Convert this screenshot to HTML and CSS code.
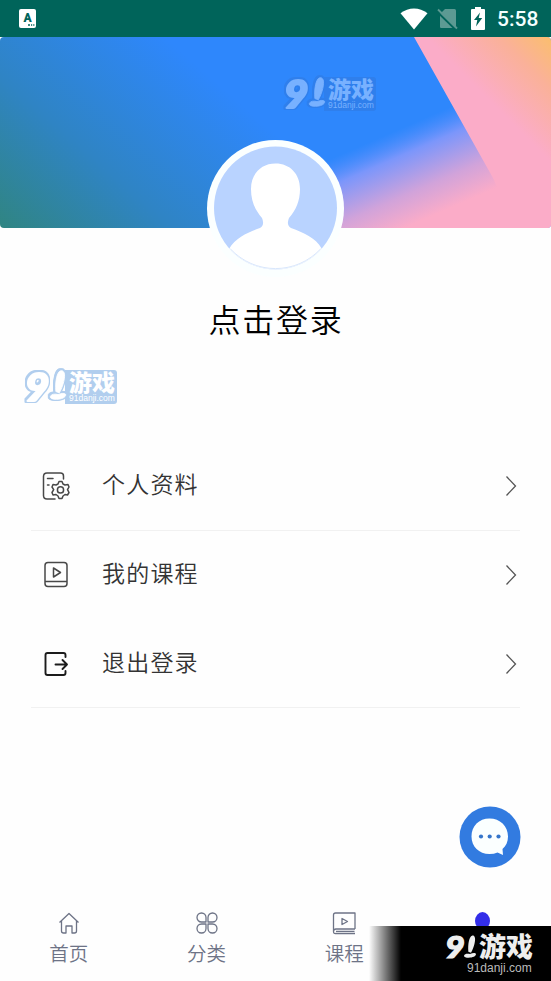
FILE: index.html
```html
<!DOCTYPE html>
<html lang="zh-CN">
<head>
<meta charset="utf-8">
<title>我的</title>
<link rel="stylesheet" href="styles.css">
</head>
<body>
<svg width="0" height="0" class="defs" aria-hidden="true">
  <defs>
    <symbol id="chevron" viewBox="0 0 12 22"><path d="M1.500 1.500L10.500 11L1.500 20.500" fill="none" stroke="#555" stroke-width="1.300"/></symbol>
    <symbol id="one" viewBox="0 0 20 36" overflow="visible"><path d="M13 1C9 2 6.500 13 7.500 25L11.500 26.500C16 19 19 7 17 3C16 1 14.500 .5 13 1Z"/><path d="M1 31C2 28 6 27.500 10 28.500C14 27 18 26.500 19 28.500C19 32 14 34 8 34C4 34 1 33 1 31Z"/></symbol>
  </defs>
</svg>
<div class="screen">
  <header class="status">
    <svg class="ime" width="17" height="19" viewBox="0 0 17 19"><rect width="17" height="19" rx="2" fill="#fff"/><text x="8.500" y="13" text-anchor="middle" class="ime-letter">A</text><path d="M9 16h2M12 16h1.200M14.200 16h1.200" stroke="#00645a" stroke-width="1.300"/></svg>
    <div class="status-right">
      <svg width="28" height="22" viewBox="0 0 28 22"><path d="M.5 5.200C8.500-1.200 19.500-1.200 27.500 5.200L14 21.500Z" fill="#fff"/></svg>
      <svg class="sim" width="21" height="22" viewBox="0 0 21 22"><path d="M8 1H17.500Q19 1 19 2.500V20H4Q3 20 3 18.500V6Z" fill="#5c9a93"/><path d="M0 3.500L19 22" stroke="#00645a" stroke-width="2"/><path d="M1 1.500L20 20.500" stroke="#5c9a93" stroke-width="1.800"/></svg>
      <svg class="battery" width="14" height="23" viewBox="0 0 14 23"><path d="M4 0H10V2H13Q14 2 14 3V22Q14 23 13 23H1Q0 23 0 22V3Q0 2 1 2H4Z" fill="#fff"/><path d="M9 5.500L3 13H6.300L5 19.500L11.200 11H7.700Z" fill="#00645a"/></svg>
      <span class="clock">5:58</span>
    </div>
  </header>

  <section class="hero">
    <svg class="hero-bg" width="551" height="191" viewBox="0 0 551 191">
      <defs>
        <linearGradient id="blue" gradientUnits="userSpaceOnUse" x1="-10" y1="200" x2="165" y2="0">
          <stop offset="0" stop-color="#30857a"/><stop offset=".48" stop-color="#2f84c4"/><stop offset="1" stop-color="#2e87fc"/>
        </linearGradient>
        <linearGradient id="mix" gradientUnits="userSpaceOnUse" x1="388" y1="97" x2="425" y2="182">
          <stop offset="0" stop-color="#5a8ffc" stop-opacity="0"/><stop offset=".27" stop-color="#7b96fb"/><stop offset=".68" stop-color="#d1a3da"/><stop offset="1" stop-color="#fbacc8"/>
        </linearGradient>
        <linearGradient id="pink" gradientUnits="userSpaceOnUse" x1="558" y1="0" x2="492" y2="66">
          <stop offset="0" stop-color="#fac068"/><stop offset=".45" stop-color="#fab199"/><stop offset="1" stop-color="#fbacc8"/>
        </linearGradient>
      </defs>
      <rect width="551" height="191" fill="url(#blue)"/>
      <path d="M270 0H551V191H270Z" fill="url(#mix)"/>
      <path d="M414 0H551V191H515L493 141Z" fill="url(#pink)"/>
    </svg>
    <svg class="mark mark-hero" width="106" height="50" viewBox="0 -6 106 50">
      <path class="plate" d="M43 3H92Q95 3 95 6V34Q95 37 92 37H43Z"/>
      <g class="logo"><text transform="translate(3 34) scale(1.100 1)" class="nine">9</text><use class="one" href="#one" x="26" y="3" width="20" height="31"/></g><text x="47" y="24" class="game">游戏</text><text x="47" y="34" class="site">91danji.com</text>
    </svg>
    <svg class="avatar" width="137" height="137" viewBox="0 0 137 137">
      <defs><clipPath id="face"><circle cx="68.500" cy="68" r="61.500"/></clipPath></defs>
      <circle cx="68.500" cy="68.500" r="68.500" fill="#fbffff"/>
      <circle cx="68.500" cy="68" r="61.500" fill="#b9d3ff"/>
      <path clip-path="url(#face)" d="M68.500 23.500C83 23.500 93 34 93 49C93 61 89 70 82 78Q79 85 84 88C97 93 108 97 115 109V131H22V109C29 97 42 92 53 88Q58 85 55 78C48 70 44 61 44 49C44 34 54 23.500 68.500 23.500Z" fill="#fff"/>
      <path d="M23.500 109A61.500 61.500 0 0 0 113.500 109" fill="none" stroke="#d9e7fc" stroke-width="1"/>
    </svg>
  </section>

  <h1 class="login">点击登录</h1>
  <svg class="mark mark-body" width="106" height="50" viewBox="0 -6 106 50">
    <path class="plate" d="M43 3H92Q95 3 95 6V34Q95 37 92 37H43Z"/>
    <g class="logo"><text transform="translate(3 34) scale(1.100 1)" class="nine">9</text><use class="one" href="#one" x="26" y="3" width="20" height="31"/></g><text x="47" y="24" class="game">游戏</text><text x="47" y="34" class="site">91danji.com</text>
  </svg>

  <nav class="menu">
    <a class="row lined">
      <svg class="row-icon" width="30" height="30" viewBox="0 0 30 30" fill="none" stroke="#484848" stroke-width="1.500" stroke-linecap="round" stroke-linejoin="round"><path d="M22.500 8V5Q22.500 2 19.500 2H6Q2.500 2 2.500 5.500V24.500Q2.500 28 6 28H14M6.500 7.500H12M6.500 14H8"/><path d="M18 10.500H21L22 13L24 14L27 13.500L28 16L26.500 18.700L28 21.500L26.500 24L24 23.500L22 25L21 27.500H18L17 25L15 23.500L12 24L11 21.500L12.700 18.700L11 16L12 13.500L15 14L17 13Z"/><circle cx="19.500" cy="18.900" r="3.100"/></svg>
      <span class="row-text">个人资料</span><svg class="arrow" width="12" height="22"><use href="#chevron"/></svg>
    </a>
    <a class="row">
      <svg class="row-icon" width="30" height="30" viewBox="0 0 30 30" fill="none" stroke="#484848" stroke-width="1.500" stroke-linejoin="round"><rect x="4" y="2.500" width="22" height="24" rx="3"/><path d="M4 21.500H26M12.500 8V17L19.500 12.500Z"/></svg>
      <span class="row-text">我的课程</span><svg class="arrow" width="12" height="22"><use href="#chevron"/></svg>
    </a>
    <a class="row lined">
      <svg class="row-icon" width="30" height="30" viewBox="0 0 30 30" fill="none" stroke="#1c1c1c" stroke-width="1.900" stroke-linecap="round" stroke-linejoin="round"><path d="M24.500 8V6Q24.500 4 22.500 4H6.500Q4.500 4 4.500 6V24Q4.500 26 6.500 26H22.500Q24.500 26 24.500 24V22M14.500 15.500H26M21.500 11L26 15.500L21.500 20"/></svg>
      <span class="row-text">退出登录</span><svg class="arrow" width="12" height="22"><use href="#chevron"/></svg>
    </a>
  </nav>

  <button class="chat" aria-label="客服">
    <svg width="62" height="62" viewBox="0 0 62 62"><circle cx="31" cy="31" r="30.500" fill="#327be0"/><path d="M30.500 12.500C41 12.500 49 20 49 30.500C49 36 47 40 43.500 43L44 49L38.500 46.500Q35 48 30.500 48C20 48 12.500 40.500 12.500 30.500C12.500 20 20 12.500 30.500 12.500Z" fill="#fbffff"/><g fill="#3575ca"><circle cx="22" cy="30.500" r="2.100"/><circle cx="30.700" cy="30.500" r="2.100"/><circle cx="39.500" cy="30.500" r="2.100"/></g></svg>
  </button>

  <footer class="tabs">
    <a class="tab"><svg width="26" height="26" viewBox="0 0 26 26"><path d="M3.500 12.500L13 3.500L22.500 12.500M5.500 11V21Q5.500 23 7.500 23H10V16H16V23H18.500Q20.500 23 20.500 21V11"/></svg><span>首页</span></a>
    <a class="tab"><svg width="26" height="26" viewBox="0 0 26 26"><path d="M12 12H7.500A4.500 4.500 0 1 1 12 7.500ZM14 12V7.500A4.500 4.500 0 1 1 18.500 12ZM12 14V18.500A4.500 4.500 0 1 1 7.500 14ZM14 14H18.500A4.500 4.500 0 1 1 14 18.500Z"/></svg><span>分类</span></a>
    <a class="tab"><svg width="26" height="26" viewBox="0 0 26 26"><path d="M24 19V3H4.500Q2.500 3 2.500 5V21.500M24 19H5Q2.500 19 2.500 21.500T5 23.500H24M5 21.300H23.500M11 8.500V14.500L16.500 11.500Z"/></svg><span>课程</span></a>
    <a class="tab"><i class="me"></i></a>
  </footer>
  <div class="badge">
    <svg width="120" height="55" viewBox="0 0 120 55" fill="#eee"><text transform="translate(14 32) scale(1.100 1)" class="badge-nine">9</text><use href="#one" x="31" y="9" width="16" height="24"/><text x="48" y="31" class="badge-game">游戏</text><text x="36" y="46" class="badge-site">91danji.com</text></svg>
  </div>
</div>
</body>
</html>
```
FILE: styles.css
```css
* { box-sizing: border-box; }
body { margin: 0; background: #fff; font-family: "Noto Sans CJK SC", sans-serif; }
.defs { position: absolute; }
.screen { position: relative; width: 551px; height: 981px; overflow: hidden; background: #fefefe; display: flex; flex-direction: column; }
svg { display: block; flex: none; }
.status { height: 37px; flex: none; background: #00645a; display: flex; align-items: center; justify-content: space-between; padding: 0 12px 0 19px; }
.ime-letter { font: 900 12px Roboto, sans-serif; fill: #00645a; }
.status-right { display: flex; align-items: center; height: 37px; }
.sim { margin-left: 9px; }
.battery { margin-left: 13px; }
.clock { margin-left: 12px; width: 42px; font: 500 21px/37px Roboto, sans-serif; color: #f4ffff; padding-top: 1px; }
.hero { position: relative; height: 191px; flex: none; }
.hero-bg { border-radius: 4px; }
.avatar { position: absolute; left: 207px; top: 103px; }
.mark { overflow: visible; }
.mark-hero { position: absolute; left: 281px; top: 31px; --ink: #78b1ff; --edge: #2f7fec; }
.mark-body { margin: 18px 0 0 22px; --ink: #fff; --edge: #b1ceee; }
.plate { fill: var(--edge); }
.logo { filter: drop-shadow(1.5px 0 0 var(--edge)) drop-shadow(-1.5px 0 0 var(--edge)) drop-shadow(0 1.5px 0 var(--edge)) drop-shadow(0 -1.5px 0 var(--edge)); }
.nine { fill: var(--ink); stroke: var(--ink); stroke-width: 2.200px; stroke-linejoin: round; }
.one { fill: var(--ink); stroke: var(--ink); stroke-width: 1px; }
.game, .site { fill: var(--ink); }
.nine { font: italic 900 38px Lato, sans-serif; }
.game { font: 900 23px "Noto Sans CJK SC", sans-serif; }
.site { font: 8.500px "Liberation Sans", sans-serif; }
.login { margin: 65px 0 0; height: 50px; text-align: center; font-size: 32px; line-height: 50px; font-weight: 350; letter-spacing: 1.700px; color: #000; padding-left: 1px; }
.menu { margin: 30px 31px 0; }
.row { height: 89px; display: flex; align-items: center; padding: 0 3px 2px 10px; }
.row:first-child { height: 90px; padding-bottom: 0; }
.row:last-child { height: 88px; padding-bottom: 0; }
.lined { border-bottom: 1px solid #f1f1f1; }
.row-text { flex: 1; margin: -6px 0 0 31px; font-size: 23px; line-height: 34px; letter-spacing: 1.200px; color: #333; font-weight: 350; }
.chat { position: absolute; left: 459px; top: 806px; padding: 0; border: 0; background: none; }
.tabs { position: absolute; left: 0; right: 0; bottom: 0; height: 78px; display: grid; grid-template-columns: repeat(4, 1fr); }
.tab { display: flex; flex-direction: column; align-items: center; padding-top: 7px; font-size: 19.500px; line-height: 34px; font-weight: 350; color: #6d7386; }
.tab svg { fill: none; stroke: #6d7386; stroke-width: 1.300px; stroke-linejoin: round; }
.me { width: 15px; height: 18px; border-radius: 50%; margin-top: 2px; background: #332ee8; }
.badge { position: absolute; right: 0; bottom: 0; width: 182px; height: 55px; padding-left: 62px; background: linear-gradient(90deg, rgba(0,0,0,0), #000 32px); }
.badge-nine { font: italic 900 31px Lato, sans-serif; stroke: #eee; stroke-width: 1.200px; }
.badge-game { font: 900 27px "Noto Sans CJK SC", sans-serif; }
.badge-site { font: 12px "Liberation Sans", sans-serif; fill: #bbb; }
```
